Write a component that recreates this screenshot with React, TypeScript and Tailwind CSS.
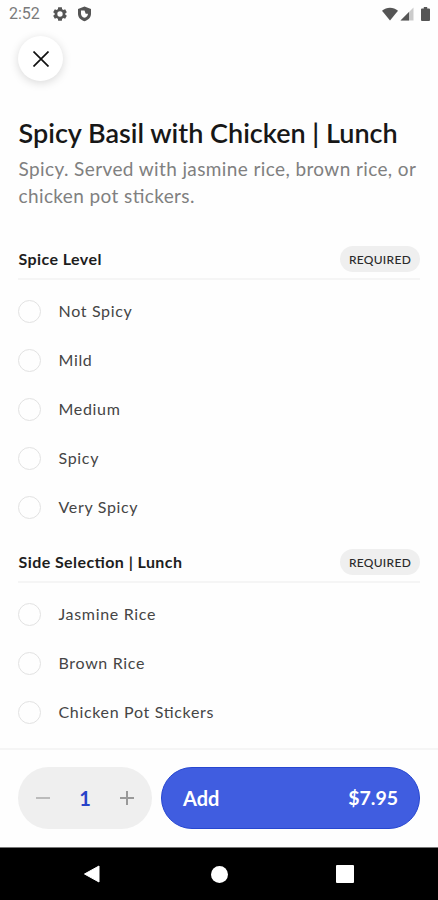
import { useState } from 'react'

type OptionGroup = {
  title: string
  options: string[]
}

const GROUPS: OptionGroup[] = [
  {
    title: 'Spice Level',
    options: ['Not Spicy', 'Mild', 'Medium', 'Spicy', 'Very Spicy'],
  },
  {
    title: 'Side Selection | Lunch',
    options: ['Jasmine Rice', 'Brown Rice', 'Chicken Pot Stickers'],
  },
]

const PRICE = 7.95

function StatusBar() {
  return (
    <div className="flex h-7 items-center justify-between pr-[8px] pl-[9px] text-[#555]">
      <div className="flex items-center">
        <span className="w-[43px] font-[Roboto] text-[16px] leading-7 text-[#7a7a7a]">2:52</span>
        <svg className="h-4 w-4" viewBox="0 0 24 24" fill="currentColor">
          <path
            fillRule="evenodd"
            d="M20 13.200a8 8 0 0 0 0-2.400l2.300-1.600-2.600-4.500-2.600 1.200a8 8 0 0 0-2-1.200L14.800 1.800H9.200l-.3 2.900a8 8 0 0 0-2 1.200L4.300 4.700 1.700 9.200 4 10.800a8 8 0 0 0 0 2.400l-2.300 1.600 2.600 4.500 2.600-1.200a8 8 0 0 0 2 1.200l.3 2.900h5.600l.3-2.900a8 8 0 0 0 2-1.200l2.600 1.200 2.600-4.500zM12 16a4 4 0 1 1 0-8 4 4 0 0 1 0 8z"
          />
        </svg>
        <svg className="ml-[9px] h-[16px] w-[15px]" viewBox="0 0 15 16" fill="currentColor">
          <path
            fillRule="evenodd"
            d="M7.500.5 14 3v4.700c0 3.700-2.700 6.300-6.500 7.500C3.700 14 1 11.400 1 7.700V3zM4 4.500v3.200c0 1.900 1.300 3.300 3.500 4.100 2.200-.8 3.500-2.200 3.500-4.100H8.700L7.500 4.500z"
          />
        </svg>
      </div>
      <div className="flex items-center">
        <svg className="h-[14px] w-4" viewBox="0 0 16 14" fill="currentColor">
          <path d="M0 3.700C4.600-.2 11.400-.2 16 3.700L8 13.500z" />
        </svg>
        <svg className="ml-[2px] h-[14px] w-[14px]" viewBox="0 0 14 14" fill="currentColor">
          <path d="M13.500.5v13H.5z" opacity=".3" />
          <path d="M9 5v8.500H.5z" />
        </svg>
        <svg className="ml-[7px] h-[14px] w-[9px]" viewBox="0 0 9 14" fill="currentColor">
          <path d="M2.800 0h3.400v1.400H8q1 0 1 1V13q0 1-1 1H1q-1 0-1-1V2.400q0-1 1-1h1.800z" />
        </svg>
      </div>
    </div>
  )
}

function OptionSection({ group }: { group: OptionGroup }) {
  const [selected, setSelected] = useState<string | null>(null)

  return (
    <section>
      <div className="flex h-[50px] items-end justify-between border-b-2 border-[#f5f5f5] pb-[6px]">
        <h2 className="pl-[0.5px] text-[16px] leading-[26px] font-bold tracking-[0.42px] text-[#1d1d1d]">
          {group.title}
        </h2>
        <span className="flex h-[26px] w-[80px] items-center justify-center rounded-full bg-[#efefef] pt-px text-[12px] font-medium tracking-[0.3px] text-[#2a2a2a]">
          REQUIRED
        </span>
      </div>
      <ul className="pt-[7px]">
        {group.options.map((option) => (
          <li key={option}>
            <button onClick={() => setSelected(option)} className="flex h-[49px] w-full items-center gap-[17.5px] text-left">
              <span
                className={`h-[23px] w-[23px] rounded-full ${
                  selected === option ? 'border-[6px] border-[#405de0]' : 'border-[1.5px] border-[#e2e2e2]'
                }`}
              />
              <span className="pb-[2px] text-[16px] leading-6 tracking-[0.67px] text-[#454545]">{option}</span>
            </button>
          </li>
        ))}
      </ul>
    </section>
  )
}

export default function App() {
  const [quantity, setQuantity] = useState(1)

  return (
    <div className="flex h-[900px] w-[438px] flex-col overflow-hidden bg-[#fefefe] font-[Lato,sans-serif] [font-feature-settings:'liga'_1]">
      <StatusBar />

      <main className="flex-1 px-[18px] pt-2">
        <button
          aria-label="Close"
          className="flex h-[45px] w-[45px] items-center justify-center rounded-full bg-white shadow-[0_2px_10px_rgba(0,0,0,0.15)]"
        >
          <svg className="h-4 w-4" viewBox="0 0 16 16" fill="none" stroke="#111" strokeWidth="1.700">
            <path d="M.5.5l15 15M15.500.5l-15 15" />
          </svg>
        </button>

        <h1 className="mt-[35px] pl-[0.5px] text-[27px] leading-[34px] font-semibold whitespace-nowrap text-[#171717]">
          Spicy Basil with Chicken | Lunch
        </h1>
        <p className="mt-[5px] pl-[0.5px] text-[19px] leading-[27px] tracking-[0.39px] whitespace-nowrap text-[#808080]">
          Spicy. Served with jasmine rice, brown rice, or
          <br />
          chicken pot stickers.
        </p>

        <div className="mt-[21px] space-y-px">
          {GROUPS.map((group) => (
            <OptionSection key={group.title} group={group} />
          ))}
        </div>
      </main>

      <footer className="flex h-[99px] gap-[9px] border-t-2 border-[#f5f5f5] px-[18px] pt-[17px]">
        <div className="flex h-[62px] w-[134px] items-center justify-between rounded-full bg-[#efefef] px-[18px]">
          <button aria-label="Remove one" onClick={() => setQuantity(Math.max(1, quantity - 1))}>
            <svg className="h-[14px] w-[14px]" viewBox="0 0 14 14" stroke="#bbb" strokeWidth="2">
              <path d="M0 7h14" />
            </svg>
          </button>
          <span className="text-[20px] font-bold text-[#2743c9]">{quantity}</span>
          <button aria-label="Add one" onClick={() => setQuantity(quantity + 1)}>
            <svg className="h-[14px] w-[14px]" viewBox="0 0 14 14" stroke="#999" strokeWidth="2">
              <path d="M0 7h14M7 0v14" />
            </svg>
          </button>
        </div>
        <button className="flex h-[62px] w-[259px] items-center justify-between rounded-full border border-[#2747d0] bg-[#405de0] px-[21px] text-[20px] font-bold text-white">
          <span>Add</span>
          <span className="text-[19.5px]">${(PRICE * quantity).toFixed(2)}</span>
        </button>
      </footer>

      {/* System navigation */}
      <nav className="flex h-[53px] items-center border-t border-[#777] bg-black pl-[83px]">
        <svg className="h-[18px] w-[17px]" viewBox="0 0 17 18" fill="#fff">
          <path d="M16 1v16L1.500 9z" stroke="#fff" strokeLinejoin="round" />
        </svg>
        <span className="ml-[111px] h-[17px] w-[17px] rounded-full bg-white" />
        <span className="ml-[108px] h-[18px] w-[18px] rounded-[1px] bg-white" />
      </nav>
    </div>
  )
}
